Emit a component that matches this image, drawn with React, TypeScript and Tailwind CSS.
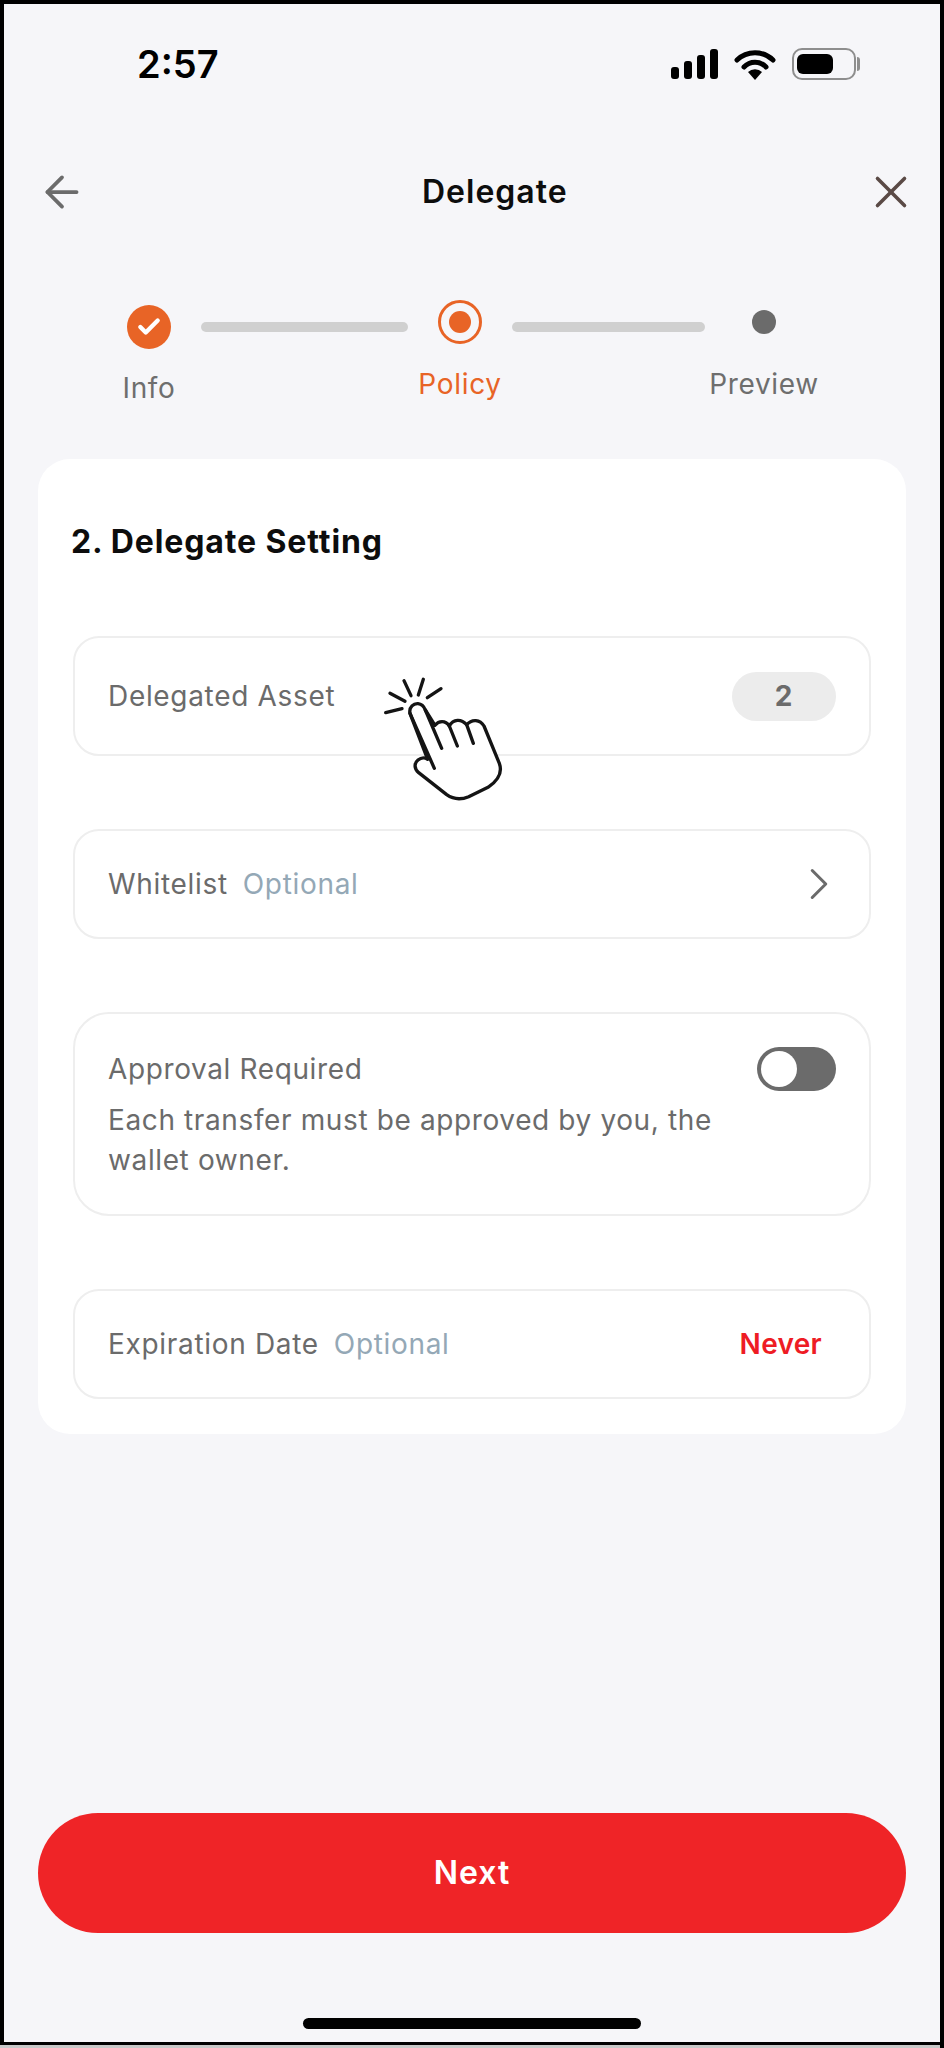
import { ArrowLeft, ChevronRight, X, Check } from 'lucide-react';

const HandIcon = () => (
  <svg viewBox="0 0 600 510" className="absolute left-[340px] top-[650px] h-[170px] w-[200px]" fill="none" stroke="#141414" strokeWidth="10" strokeLinecap="round" strokeLinejoin="round">
    <path
      fill="#fff"
      d="M210 190C206 170 222 160 234 161C246 162 252 170 256 180L285 226C296 212 316 210 328 228C340 206 364 206 380 224C396 206 420 208 432 228L478 340C488 368 474 392 444 412L386 440C362 450 340 448 320 434L236 368C222 356 222 340 234 330C244 322 254 322 263 328Z"
    />
    <path d="M210 190L283 355M256 180L305 295M328 228L352 288M380 224L400 280" />
    <path d="M137 188L186 176M150 130L195 154M192 92L213 137M250 88L235 135M303 116L262 143" />
  </svg>
);

const StatusIcons = () => (
  <div className="flex items-center gap-[16px]">
    <div className="flex items-end gap-[5px]">
      <div className="h-[12px] w-[8px] rounded-[3px] bg-black" />
      <div className="h-[18px] w-[8px] rounded-[3px] bg-black" />
      <div className="h-[24px] w-[8px] rounded-[3px] bg-black" />
      <div className="h-[30px] w-[8px] rounded-[3px] bg-black" />
    </div>
    <svg viewBox="0 0 42 31" className="h-[31px] w-[42px]" fill="none">
      <path d="M3 11A26 26 0 0 1 39 11" stroke="#000" strokeWidth="5" strokeLinecap="round" />
      <path d="M10 18A15 15 0 0 1 32 18" stroke="#000" strokeWidth="5" strokeLinecap="round" />
      <path d="M21 31L14 23A10 10 0 0 1 28 23Z" fill="#000" />
    </svg>
    <div className="flex items-center gap-[1px]">
      <div className="flex h-[32px] w-[64px] items-center rounded-[10px] border-2 border-[#8e8e8e] px-[3px]">
        <div className="h-[20px] w-[36px] rounded-[6px] bg-black" />
      </div>
      <div className="h-[14px] w-[3px] rounded-r-full bg-[#8e8e8e]" />
    </div>
  </div>
);

const Stepper = () => (
  <div className="mt-[46px] flex items-start pl-[123px] text-[28px] leading-[32px] tracking-[0.68px]">
    <div className="mt-[5px] flex w-[44px] flex-col items-center">
      <div className="flex h-[44px] w-[44px] items-center justify-center rounded-full bg-[#e86426]">
        <Check size={26} strokeWidth={4} className="text-white" />
      </div>
      <span className="mt-[23px] text-[#6e6e6e]">Info</span>
    </div>
    <div className="ml-[30px] mt-[22px] h-[10px] w-[207px] rounded-full bg-[#d0d0d0]" />
    <div className="ml-[30px] flex w-[44px] flex-col items-center">
      <div className="flex h-[44px] w-[44px] items-center justify-center rounded-full border-[3px] border-[#e86426]">
        <div className="h-[22px] w-[22px] rounded-full bg-[#e86426]" />
      </div>
      <span className="mt-[24px] text-[#e86426]">Policy</span>
    </div>
    <div className="ml-[30px] mt-[22px] h-[10px] w-[193px] rounded-full bg-[#d0d0d0]" />
    <div className="ml-[47px] flex w-[24px] flex-col items-center">
      <div className="mt-[10px] h-[24px] w-[24px] rounded-full bg-[#6b6b6b]" />
      <span className="mt-[34px] whitespace-nowrap text-[#6e6e6e]">Preview</span>
    </div>
  </div>
);

export default function App() {
  return (
    <div className="relative h-[2048px] w-[944px] border-r-[4px] border-black bg-[#c8c8c8]">
      <div className="flex h-[2045px] w-full flex-col border-b-[3px] border-l-[4px] border-t-[4px] border-black bg-[#f6f6f9] font-['Inter',sans-serif] text-[#6b6b6b]">
        {/* status bar */}
        <div className="flex h-[126px] items-start justify-between pl-[133px] pr-[80px] pt-[37px]">
          <span className="text-[38px] font-semibold leading-[46px] text-black">2:57</span>
          <div className="mt-[7px]">
            <StatusIcons />
          </div>
        </div>

        {/* header */}
        <div className="flex h-[124px] items-center pl-[33px] pr-[22px]">
          <ArrowLeft size={50} strokeWidth={1.8} className="text-[#6b6b6b]" />
          <span className="ml-[335px] text-[32px] font-semibold tracking-[1px] text-[#0d0d0d]">Delegate</span>
          <X size={54} strokeWidth={1.6} className="ml-auto text-[#5a4a46]" />
        </div>

        <Stepper />

        {/* card */}
        <div className="mx-[34px] mt-[55px] flex h-[975px] flex-col rounded-[32px] bg-white px-[35px]">
          <h1 className="-ml-[2px] flex h-[177px] items-center gap-[7px] pb-[12px] text-[32px] font-bold leading-none tracking-[0.9px] text-[#0d0d0d]">
            <span>2.</span>
            <span>Delegate Setting</span>
          </h1>

          <div className="flex flex-col gap-[73px] text-[28px] tracking-[0.68px]">
            <div className="flex h-[120px] items-center justify-between rounded-[26px] border-2 border-[#eeeeee] px-[33px]">
              <span>Delegated Asset</span>
              <div className="flex h-[49px] w-[104px] items-center justify-center rounded-full bg-[#ececec] font-bold">2</div>
            </div>

            <div className="flex h-[110px] items-center justify-between rounded-[26px] border-2 border-[#eeeeee] pl-[33px] pr-[23px]">
              <div className="flex gap-[15px]">
                <span>Whitelist</span>
                <span className="text-[#94a8b6]">Optional</span>
              </div>
              <ChevronRight size={54} strokeWidth={1.35} className="text-[#6b6b6b]" />
            </div>

            <div className="flex h-[204px] flex-col rounded-[36px] border-2 border-[#eeeeee] px-[33px] pt-[35px] tracking-[0.62px]">
              <div className="flex items-start justify-between">
                <span className="leading-[40px]">Approval Required</span>
                <div className="-mt-[2px] flex h-[44px] w-[79px] items-center rounded-full bg-[#6b6b6b] pl-[4px]">
                  <div className="h-[36px] w-[36px] rounded-full bg-white" />
                </div>
              </div>
              <p className="mt-[9px] w-[640px] leading-[40px]">Each transfer must be approved by you, the wallet owner.</p>
            </div>

            <div className="flex h-[110px] items-center justify-between rounded-[26px] border-2 border-[#eeeeee] pl-[33px] pr-[47px]">
              <div className="flex gap-[15px]">
                <span>Expiration Date</span>
                <span className="text-[#94a8b6]">Optional</span>
              </div>
              <span className="font-semibold tracking-[0.3px] text-[#ee1c24]">Never</span>
            </div>
          </div>
        </div>

        <div className="flex-1" />

        {/* next button */}
        <button className="mx-[34px] flex h-[120px] items-center justify-center rounded-full bg-[#ef2427] text-[32px] font-semibold tracking-[1px] text-white">Next</button>

        {/* home bar */}
        <div className="mx-auto mb-[13px] mt-[85px] h-[11px] w-[338px] rounded-full bg-black" />
      </div>

      <HandIcon />
    </div>
  );
}
